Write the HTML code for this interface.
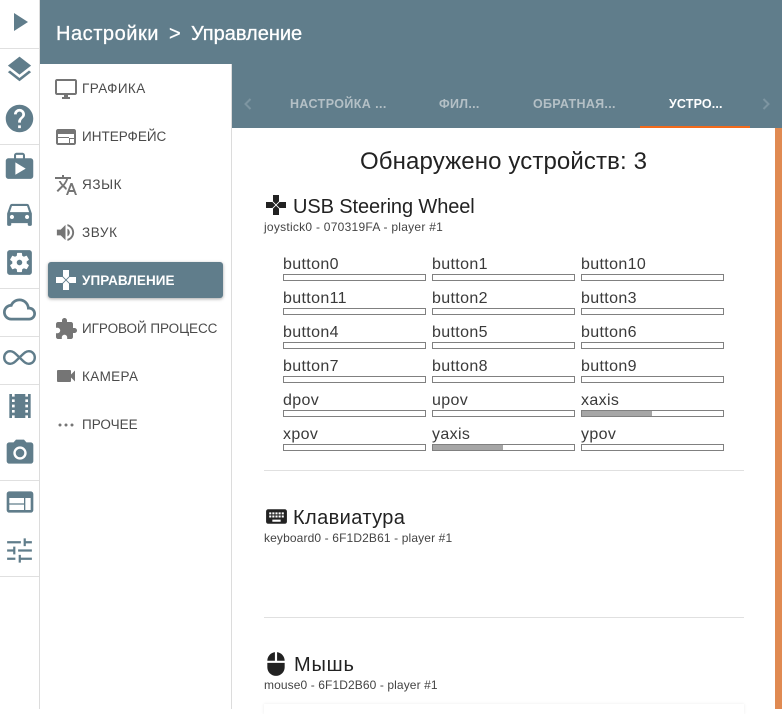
<!DOCTYPE html>
<html><head><meta charset="utf-8">
<style>
html,body{margin:0;padding:0;background:#fff}
body{width:782px;height:709px;position:relative;overflow:hidden;font-family:"Liberation Sans",sans-serif;color:#222}
.a{position:absolute;white-space:nowrap}
svg{position:absolute;display:block}
.r{fill:#607d8b}
.m{fill:#757575}
.hr{position:absolute;left:0;width:39px;height:1px;background:#e0e0e0}
.mt{position:absolute;left:82px;font-size:13.5px;line-height:16px;color:#4a4a4a;white-space:nowrap}
.tab{position:absolute;top:96px;font-size:12.5px;line-height:16px;font-weight:bold;color:#b4c0c6;white-space:nowrap}
.l{position:absolute;font-size:16px;line-height:18px;letter-spacing:.35px;color:#3a3a3a;white-space:nowrap}
.b{position:absolute;width:141px;height:5px;border:1px solid #808080;background:#fff}
.b i{display:block;height:5px;background:#a6a6a6}
.d{position:absolute;left:264px;width:480px;height:1px;background:#e0e0e0}
.h{position:absolute;left:293px;font-size:20px;line-height:24px;color:#222;white-space:nowrap}
.s{position:absolute;left:264px;font-size:12px;line-height:14px;color:#444;white-space:nowrap}
.w{position:absolute;top:21px;font-size:20px;line-height:26px;color:#fff;-webkit-text-stroke:.3px #fff;white-space:nowrap}
</style></head>
<body>
<div class="a" style="left:40px;top:0;width:742px;height:64px;background:#607d8b"></div>
<div class="a" style="left:232px;top:64px;width:550px;height:64px;background:#607d8b"></div>
<div class="a" style="left:39px;top:0;width:1px;height:709px;background:#dcdcdc"></div>
<div class="a" style="left:231px;top:64px;width:1px;height:645px;background:#dcdcdc"></div>
<div class="w" style="left:56px;letter-spacing:.55px">Настройки</div>
<div class="w" style="left:169px">&gt;</div>
<div class="w" style="left:191px">Управление</div>

<div class="hr" style="top:48px"></div><div class="hr" style="top:144px"></div><div class="hr" style="top:288px"></div><div class="hr" style="top:336px"></div><div class="hr" style="top:384px"></div><div class="hr" style="top:480px"></div><div class="hr" style="top:576px"></div>

<svg class="r" style="left:8px;top:10px" width="24" height="24" viewBox="0 0 24 24"><path d="M6 3v18l14-9z"/></svg>
<svg class="r" style="left:4px;top:54px" width="31" height="31" viewBox="0 0 24 24"><path d="M11.99 18.54l-7.37-5.73L3 14.07l9 7 9-7-1.63-1.27-7.38 5.74zM12 16l7.36-5.73L21 9l-9-7-9 7 1.63 1.27L12 16z"/></svg>
<svg class="r" style="left:3px;top:102px" width="33" height="33" viewBox="0 0 24 24"><path d="M12 2C6.48 2 2 6.48 2 12s4.48 10 10 10 10-4.48 10-10S17.52 2 12 2zm1 17h-2v-2h2v2zm2.07-7.75l-.9.92C13.45 12.9 13 13.5 13 15h-2v-.5c0-1.1.45-2.1 1.17-2.83l1.24-1.26c.37-.36.59-.86.59-1.41 0-1.1-.9-2-2-2s-2 .9-2 2H8c0-2.21 1.79-4 4-4s4 1.79 4 4c0 .88-.36 1.68-.93 2.25z"/></svg>
<svg class="r" style="left:3px;top:150px" width="33" height="33" viewBox="0 0 24 24"><path fill-rule="evenodd" d="M20 6h-4V4c0-1.11-.89-2-2-2h-4c-1.11 0-2 .89-2 2v2H4c-1.11 0-1.99.89-1.99 2L2 19c0 1.11.89 2 2 2h16c1.11 0 2-.89 2-2V8c0-1.11-.89-2-2-2zm-5.5 0h-5V3.5h5V6zM9 9v9l7.5-4.5z"/></svg>
<svg class="r" style="left:3px;top:197px" width="33" height="33" viewBox="0 0 24 24"><path d="M18.92 6.01C18.72 5.42 18.16 5 17.5 5h-11c-.66 0-1.21.42-1.42 1.01L3 12v8c0 .55.45 1 1 1h1c.55 0 1-.45 1-1v-1h12v1c0 .55.45 1 1 1h1c.55 0 1-.45 1-1v-8l-2.08-5.99zM6.5 16c-.83 0-1.5-.67-1.5-1.5S5.67 13 6.5 13s1.5.67 1.5 1.5S7.33 16 6.5 16zm11 0c-.83 0-1.5-.67-1.5-1.5s.67-1.5 1.5-1.5 1.5.67 1.5 1.5-.67 1.5-1.5 1.5zM5 11l1.5-4.5h11L19 11H5z"/></svg>
<svg class="r" style="left:3px;top:246px" width="33" height="33" viewBox="0 0 24 24"><path d="M12 10c-1.1 0-2 .9-2 2s.9 2 2 2 2-.9 2-2-.9-2-2-2zm7-7H5c-1.11 0-2 .9-2 2v14c0 1.1.89 2 2 2h14c1.11 0 2-.9 2-2V5c0-1.1-.89-2-2-2zm-1.75 9c0 .23-.02.46-.05.68l1.48 1.16c.13.11.17.3.08.45l-1.4 2.42c-.09.15-.27.21-.43.15l-1.74-.7c-.36.28-.76.51-1.18.69l-.26 1.85c-.03.17-.18.3-.35.3h-2.8c-.17 0-.32-.13-.35-.29l-.26-1.85c-.43-.18-.82-.41-1.18-.69l-1.74.7c-.16.06-.34 0-.43-.15l-1.4-2.42c-.09-.15-.05-.34.08-.45l1.48-1.16c-.03-.23-.05-.46-.05-.69 0-.23.02-.46.05-.68l-1.48-1.16c-.13-.11-.17-.3-.08-.45l1.4-2.42c.09-.15.27-.21.43-.15l1.74.7c.36-.28.76-.51 1.18-.69l.26-1.85c.03-.17.18-.3.35-.3h2.8c.17 0 .32.13.35.29l.26 1.85c.43.18.82.41 1.18.69l1.74-.7c.16-.06.34 0 .43.15l1.4 2.42c.09.15.05.34-.08.45l-1.48 1.16c.03.23.05.46.05.69z"/></svg>
<svg class="r" style="left:3px;top:293px" width="33" height="33" viewBox="0 0 24 24"><path d="M19.35 10.04C18.67 6.59 15.64 4 12 4 9.11 4 6.6 5.64 5.35 8.04 2.34 8.36 0 10.91 0 14c0 3.31 2.69 6 6 6h13c2.76 0 5-2.24 5-5 0-2.64-2.05-4.78-4.65-4.96zM19 18H6c-2.21 0-4-1.79-4-4s1.79-4 4-4h.71C7.37 7.69 9.48 6 12 6c3.04 0 5.5 2.46 5.5 5.5v.5H19c1.66 0 3 1.34 3 3s-1.34 3-3 3z"/></svg>
<svg style="left:0;top:340px;fill:none;stroke:#607d8b;stroke-width:2.4" width="39" height="30" viewBox="0 0 39 30"><path d="M19.5 17.5C16 14.5 14 11.2 10.2 11.2C6.7 11.2 4.2 14 4.2 17.5C4.2 21 6.7 23.8 10.2 23.8C14 23.8 16 20.5 19.5 17.5C23 14.5 25 11.2 28.8 11.2C32.3 11.2 34.8 14 34.8 17.5C34.8 21 32.3 23.8 28.8 23.8C25 23.8 23 20.5 19.5 17.5z"/></svg>
<svg class="r" style="left:3.5px;top:390px" width="32" height="32" viewBox="0 0 24 24"><path d="M18 3v2h-2V3H8v2H6V3H4v18h2v-2h2v2h8v-2h2v2h2V3h-2zM8 17H6v-2h2v2zm0-4H6v-2h2v2zm0-4H6V7h2v2zm10 8h-2v-2h2v2zm0-4h-2v-2h2v2zm0-4h-2V7h2v2z"/></svg>
<svg class="r" style="left:3.5px;top:437px" width="32" height="32" viewBox="0 0 24 24"><circle cx="12" cy="12" r="3.2"/><path d="M9 2L7.17 4H4c-1.1 0-2 .9-2 2v12c0 1.1.9 2 2 2h16c1.1 0 2-.9 2-2V6c0-1.1-.9-2-2-2h-3.17L15 2H9zm3 15c-2.76 0-5-2.24-5-5s2.24-5 5-5 5 2.24 5 5-2.24 5-5 5z"/></svg>
<svg class="r" style="left:3.5px;top:486px" width="32" height="32" viewBox="0 0 24 24"><path d="M20 4H4c-1.1 0-1.99.9-1.99 2L2 18c0 1.1.9 2 2 2h16c1.1 0 2-.9 2-2V6c0-1.1-.9-2-2-2zm-5 14H4v-4h11v4zm0-5H4V9h11v4zm5 5h-4V9h4v9z"/></svg>
<svg class="r" style="left:3px;top:534px" width="33" height="33" viewBox="0 0 24 24"><path d="M3 17.2v1.6h6v-1.6H3zM3 5.2v1.6h10V5.2H3zm10 15.6v-2h8v-1.6h-8v-2h-1.6v5.6H13zM7.4 9.2v2H3v1.6h4.4v2H9V9.2H7.4zM21 12.8v-1.6H11v1.6h10zM15 8.8h1.6v-2H21V5.2h-4.4v-2H15v5.6z"/></svg>

<svg class="m" style="left:54px;top:77px" width="24" height="24" viewBox="0 0 24 24"><path d="M21 2H3c-1.1 0-2 .9-2 2v12c0 1.1.9 2 2 2h7v2H8v2h8v-2h-2v-2h7c1.1 0 2-.9 2-2V4c0-1.1-.9-2-2-2zm0 14H3V4h18v12z"/></svg>
<svg class="m" style="left:54px;top:125px" width="24" height="24" viewBox="0 0 24 24"><path d="M20 4H4c-1.1 0-1.99.9-1.99 2L2 18c0 1.1.9 2 2 2h16c1.1 0 2-.9 2-2V6c0-1.1-.9-2-2-2zM4 9h16v4h-5v5H4v-5h11v-1H4zm12 5h4v4h-4z" fill-rule="evenodd"/></svg>
<svg class="m" style="left:54px;top:173px" width="24" height="24" viewBox="0 0 24 24"><path d="M12.87 15.07l-2.54-2.51.03-.03c1.74-1.94 2.98-4.17 3.71-6.53H17V4h-7V2H8v2H1v1.99h11.17C11.5 7.92 10.44 9.75 9 11.35 8.07 10.32 7.3 9.19 6.69 8h-2c.73 1.63 1.73 3.17 2.98 4.56l-5.09 5.02L4 19l5-5 3.11 3.11.76-2.04zM18.5 10h-2L12 22h2l1.12-3h4.75L21 22h2l-4.5-12zm-2.62 7l1.62-4.33L19.12 17h-3.24z"/></svg>
<svg class="m" style="left:54px;top:221px" width="23" height="23" viewBox="0 0 24 24"><path d="M3 9v6h4l5 5V4L7 9H3zm13.5 3c0-1.77-1.02-3.29-2.5-4.03v8.05c1.48-.73 2.5-2.25 2.5-4.02zM14 3.23v2.06c2.89.86 5 3.54 5 6.71s-2.11 5.85-5 6.71v2.06c4.01-.91 7-4.49 7-8.77s-2.99-7.86-7-8.77z"/></svg>

<div class="a" style="left:48px;top:262px;width:175px;height:36px;background:#607d8b;border-radius:3px;box-shadow:0 1px 3px rgba(0,0,0,.35)"></div>
<svg style="left:54px;top:268px;fill:#fff" width="24" height="24" viewBox="0 0 24 24"><path d="M15 8.4V2H9v6.4l3 3 3-3zM8.4 9H2v6h6.4l3-3-3-3zM9 15.6V22h6v-6.4l-3-3-3 3zM15.6 9l-3 3 3 3H22V9h-6.4z"/></svg>
<svg class="m" style="left:54px;top:317px" width="24" height="24" viewBox="0 0 24 24"><path d="M20.5 11H19V7c0-1.1-.9-2-2-2h-4V3.5C13 2.12 11.88 1 10.5 1S8 2.12 8 3.5V5H4c-1.1 0-1.99.9-1.99 2v3.8H3.5c1.49 0 2.7 1.21 2.7 2.7s-1.21 2.7-2.7 2.7H2V20c0 1.1.9 2 2 2h3.8v-1.5c0-1.49 1.21-2.7 2.7-2.7 1.49 0 2.7 1.21 2.7 2.7V22H17c1.1 0 2-.9 2-2v-4h1.5c1.38 0 2.5-1.12 2.5-2.5S21.88 11 20.5 11z"/></svg>
<svg class="m" style="left:54px;top:364px" width="24" height="24" viewBox="0 0 24 24"><path d="M17 10.5V7c0-.55-.45-1-1-1H4c-.55 0-1 .45-1 1v10c0 .55.45 1 1 1h12c.55 0 1-.45 1-1v-3.5l4 4v-11l-4 4z"/></svg>
<svg class="m" style="left:54px;top:412px" width="24" height="24" viewBox="0 0 24 24"><circle cx="6" cy="13" r="1.5"/><circle cx="12" cy="13" r="1.5"/><circle cx="18" cy="13" r="1.5"/></svg>

<div class="mt" style="top:81px;letter-spacing:.4px">ГРАФИКА</div>
<div class="mt" style="top:129px">ИНТЕРФЕЙС</div>
<div class="mt" style="top:177px;letter-spacing:.6px">ЯЗЫК</div>
<div class="mt" style="top:225px;letter-spacing:.6px">ЗВУК</div>
<div class="mt" style="top:273px;color:#fff;font-weight:bold;letter-spacing:.06px">УПРАВЛЕНИЕ</div>
<div class="mt" style="top:321px;letter-spacing:-.05px">ИГРОВОЙ ПРОЦЕСС</div>
<div class="mt" style="top:369px;letter-spacing:.35px">КАМЕРА</div>
<div class="mt" style="top:417px">ПРОЧЕЕ</div>

<svg style="left:240px;top:96px;fill:none;stroke:#7d95a1;stroke-width:2" width="16" height="16" viewBox="0 0 16 16"><path d="M10.5 3L5.5 8l5 5"/></svg>
<svg style="left:758px;top:96px;fill:none;stroke:#7d95a1;stroke-width:2" width="16" height="16" viewBox="0 0 16 16"><path d="M5.5 3l5 5-5 5"/></svg>
<div class="tab" style="left:290px;letter-spacing:.4px">НАСТРОЙКА ...</div>
<div class="tab" style="left:439px;letter-spacing:.3px">ФИЛ...</div>
<div class="tab" style="left:533px;letter-spacing:.3px">ОБРАТНАЯ...</div>
<div class="tab" style="left:669px;color:#fff;letter-spacing:.15px">УСТРО...</div>
<div class="a" style="left:640px;top:126px;width:110px;height:2px;background:#f26a1b"></div>
<div class="a" style="left:775px;top:128px;width:7px;height:581px;background:#e08a52"></div>

<div class="a" style="left:360px;top:147px;font-size:24px;line-height:30px;letter-spacing:.12px;color:#222">Обнаружено устройств: 3</div>

<svg style="left:264px;top:193px;fill:#222" width="24" height="24" viewBox="0 0 24 24"><path d="M15 8.4V2H9v6.4l3 3 3-3zM8.4 9H2v6h6.4l3-3-3-3zM9 15.6V22h6v-6.4l-3-3-3 3zM15.6 9l-3 3 3 3H22V9h-6.4z"/></svg>
<div class="h" style="top:195px;letter-spacing:-.1px">USB Steering Wheel</div>
<div class="s" style="top:220px;letter-spacing:.26px">joystick0 - 070319FA - player #1</div>

<div class="l" style="left:283px;top:256px">button0</div><div class="b" style="left:283px;top:274px"></div>
<div class="l" style="left:432px;top:256px">button1</div><div class="b" style="left:432px;top:274px"></div>
<div class="l" style="left:581px;top:256px">button10</div><div class="b" style="left:581px;top:274px"></div>
<div class="l" style="left:283px;top:290px">button11</div><div class="b" style="left:283px;top:308px"></div>
<div class="l" style="left:432px;top:290px">button2</div><div class="b" style="left:432px;top:308px"></div>
<div class="l" style="left:581px;top:290px">button3</div><div class="b" style="left:581px;top:308px"></div>
<div class="l" style="left:283px;top:324px">button4</div><div class="b" style="left:283px;top:342px"></div>
<div class="l" style="left:432px;top:324px">button5</div><div class="b" style="left:432px;top:342px"></div>
<div class="l" style="left:581px;top:324px">button6</div><div class="b" style="left:581px;top:342px"></div>
<div class="l" style="left:283px;top:358px">button7</div><div class="b" style="left:283px;top:376px"></div>
<div class="l" style="left:432px;top:358px">button8</div><div class="b" style="left:432px;top:376px"></div>
<div class="l" style="left:581px;top:358px">button9</div><div class="b" style="left:581px;top:376px"></div>
<div class="l" style="left:283px;top:392px">dpov</div><div class="b" style="left:283px;top:410px"></div>
<div class="l" style="left:432px;top:392px">upov</div><div class="b" style="left:432px;top:410px"></div>
<div class="l" style="left:581px;top:392px">xaxis</div><div class="b" style="left:581px;top:410px"><i style="width:70px"></i></div>
<div class="l" style="left:283px;top:426px">xpov</div><div class="b" style="left:283px;top:444px"></div>
<div class="l" style="left:432px;top:426px">yaxis</div><div class="b" style="left:432px;top:444px"><i style="width:70px"></i></div>
<div class="l" style="left:581px;top:426px">ypov</div><div class="b" style="left:581px;top:444px"></div>

<div class="d" style="top:470px"></div>
<svg style="left:264px;top:504px;fill:#222" width="25" height="25" viewBox="0 0 24 24"><path d="M20 5H4c-1.1 0-1.99.9-1.99 2L2 17c0 1.1.9 2 2 2h16c1.1 0 2-.9 2-2V7c0-1.1-.9-2-2-2zm-9 3h2v2h-2V8zm0 3h2v2h-2v-2zM8 8h2v2H8V8zm0 3h2v2H8v-2zm-1 2H5v-2h2v2zm0-3H5V8h2v2zm9 7H8v-2h8v2zm0-4h-2v-2h2v2zm0-3h-2V8h2v2zm3 3h-2v-2h2v2zm0-3h-2V8h2v2z"/></svg>
<div class="h" style="top:506px;letter-spacing:.4px">Клавиатура</div>
<div class="s" style="top:531px;letter-spacing:.13px">keyboard0 - 6F1D2B61 - player #1</div>
<div class="d" style="top:617px"></div>
<svg style="left:263px;top:651px;fill:#222" width="26" height="26" viewBox="0 0 24 24"><path d="M13 1.07V9h7c0-4.08-3.05-7.44-7-7.93zM4 15c0 4.42 3.58 8 8 8s8-3.58 8-8v-4H4v4zm7-13.93C7.05 1.56 4 4.92 4 9h7V1.07z"/></svg>
<div class="h" style="top:653px;letter-spacing:.8px;left:294px">Мышь</div>
<div class="s" style="top:678px;letter-spacing:.1px">mouse0 - 6F1D2B60 - player #1</div>
<div class="a" style="left:264px;top:704px;width:480px;height:10px;background:#fff;box-shadow:0 0 3px rgba(0,0,0,.08)"></div>
</body></html>
